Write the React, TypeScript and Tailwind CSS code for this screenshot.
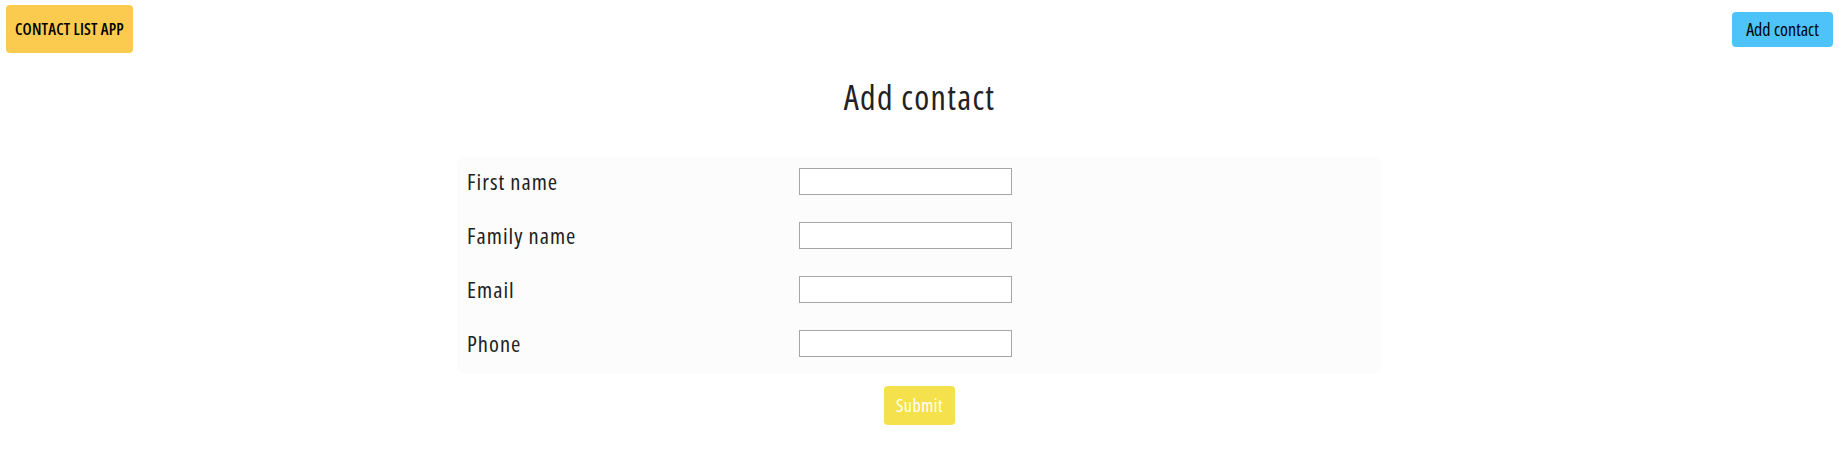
import React from 'react'

const FIELDS = [
  { id: 'first', label: 'First name' },
  { id: 'family', label: 'Family name' },
  { id: 'email', label: 'Email' },
  { id: 'phone', label: 'Phone' },
]

export default function App() {
  return (
    <div className="min-h-[463px] bg-white font-['Open_Sans',sans-serif] font-stretch-condensed text-[#222]">
      {/* Header */}
      <div className="flex items-center justify-between px-[6px] pt-[5px]">
        <button className="h-[48px] w-[127px] rounded-[4px] bg-[#fbcb4f] text-[16px] font-semibold tracking-[0.2px] text-black">
          CONTACT LIST APP
        </button>
        <button className="h-[35px] w-[101px] rounded-[4px] bg-[#4dc3f9] text-[18px] font-medium text-black">
          Add contact
        </button>
      </div>

      <h1 className="mt-[24px] text-center text-[34px] leading-[40px] font-medium tracking-[1.3px]">Add contact</h1>

      {/* Form */}
      <div className="mx-auto mt-[41px] w-[925px] rounded-[6px] bg-[#fcfcfc] pt-[10px] pb-[16px] pl-[10px]">
        <div className="flex flex-col gap-[27px]">
          {FIELDS.map(f => (
            <div key={f.id} className="flex items-center">
              <label htmlFor={f.id} className="w-[332px] text-[22.5px] leading-[27px] font-medium tracking-[1px]">{f.label}</label>
              <input id={f.id} type="text" className="h-[27px] w-[213px] border border-[#a6a6a6] bg-white" />
            </div>
          ))}
        </div>
      </div>

      <div className="mt-[13px] flex justify-center">
        <button className="h-[39px] w-[71px] rounded-[4px] bg-[#f5e14b] text-[18px] font-medium tracking-[0.5px] text-white">Submit</button>
      </div>
    </div>
  )
}
